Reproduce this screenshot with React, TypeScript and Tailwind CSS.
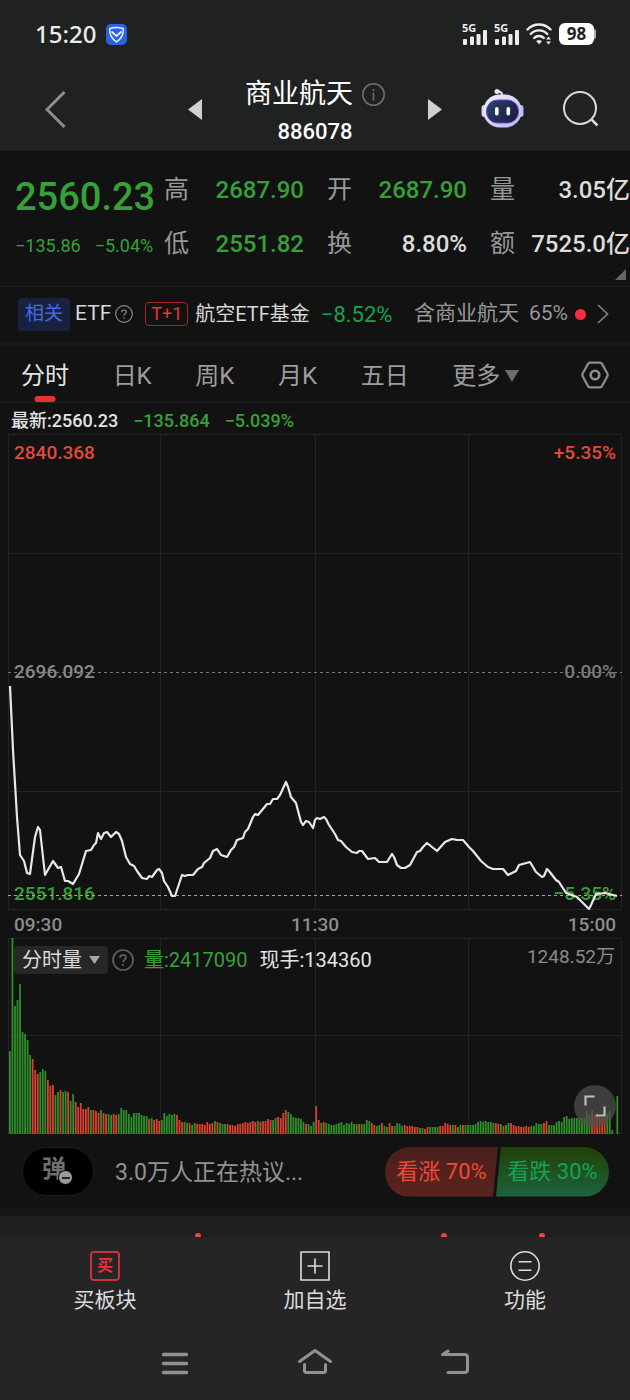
import { useState } from "react";

type Tone = "up" | "down" | "plain";

type Quote = {
  label: string;
  value: string;
  tone: Tone;
};

const toneClass: Record<Tone, string> = {
  up: "text-[#e5493b]",
  down: "text-[#36a137]",
  plain: "text-[#dcdcdc]",
};

const quotes: Quote[] = [
  { label: "高", value: "2687.90", tone: "down" },
  { label: "开", value: "2687.90", tone: "down" },
  { label: "量", value: "3.05亿", tone: "plain" },
  { label: "低", value: "2551.82", tone: "down" },
  { label: "换", value: "8.80%", tone: "plain" },
  { label: "额", value: "7525.0亿", tone: "plain" },
];

const periods = ["分时", "日K", "周K", "月K", "五日"];

// intraday price line, in chart units (614 x 476)
const pricePoints =
  "2,252 5,316 9,383 12,421 16,427 19,439 22,440 27,403 30,393 32,396 37,441 41,434 45,427 50,434 53,433 57,447 60,447 65,450 71,440 78,417 83,416 86,411 88,409 90,399 93,405 96,399 99,398 103,403 108,398 111,400 114,407 118,423 122,430 126,432 129,437 134,444 139,445 141,442 144,443 149,436 151,435 154,439 156,447 160,453 164,462 167,462 174,441 177,442 180,441 185,441 190,435 194,433 196,429 202,424 205,417 209,415 213,421 219,423 223,416 226,413 229,406 235,404 237,398 240,395 245,383 247,380 250,381 259,370 262,370 265,365 269,365 272,361 278,348 280,353 283,363 288,369 293,388 295,391 298,387 301,388 305,394 307,386 309,384 312,385 316,383 318,385 321,391 327,400 330,406 333,407 338,413 344,418 349,419 351,417 354,417 360,425 367,424 371,428 379,428 384,420 386,423 389,431 393,434 397,434 402,431 409,418 412,417 415,413 419,409 429,417 437,408 444,405 449,406 455,406 461,413 465,417 473,427 480,433 485,435 495,435 500,441 508,437 511,431 522,428 528,438 534,443 536,442 539,435 541,437 548,446 551,448 558,459 569,463 581,475 583,471 588,460 597,459 609,462";

// one entry per minute: bar height + direction (r = up, g = down)
const volumes = (
  "83g 196g 128g 134g 150g 102g 100g 94g 79g 75r 64r 60r 62g 65g 63g 54r 48r 49r 39g 42g 44r 42g 43g 42r 33g 40g 32r 27r 31r 25r 25r 27r 24g 24r 23r 21r 24g 21r 20r 20g 19g 20r 19r 20g 26g 24g 24g 20g 17g 21g 21g 21g 19g 18g 18g 15r 16g 14r 15r 13r " +
  "14g 21g 18g 20g 19g 20g 19r 14r 12r 12g 11g 11r 9g 11g 10r 10r 10r 9r 12r 10r 11r 13g 12r 11g 10g 10g 10r 9r 9r 8r 10r 10r 11r 12r 11r 12r 13r 12r 13g 12r 13r 13r 15r 14r 14g 16g 17r 16r 21r 24r 22g 20g 17g 16g 16g 15g 12g 10r 10g 8g " +
  "12g 28r 14r 11g 12r 11g 10g 9g 9g 10g 11g 12g 9g 11g 10g 12g 10g 10g 10r 10g 10g 14g 13g 11r 9r 8g 9g 11r 8g 7g 11r 8r 8g 11g 10g 8g 9r 8r 8r 8r 7r 7r 6g 6g 5r 7r 7g 7g 7g 7g 8r 8r 11r 10r 9r 9g 9r 7g 9g 9r " +
  "9g 9g 9g 9g 10g 12g 13g 12g 13g 12g 12g 11g 11r 10r 10g 8r 9g 11g 11r 9r 8r 8r 7r 7r 8r 7r 8g 8g 11g 10g 10g 11r 13r 9g 9g 9g 12g 13g 12g 17g 18g 15g 16g 16g 16g 16g 16g 16g 23g 19g 24r 18r 17r 17r 16r 17r 20g 23g 4g 0g 38g"
).split(" ");

function StatusBar() {
  return (
    <div className="flex h-[68px] items-center justify-between pl-[35px] pr-[34px]">
      <div className="flex items-center gap-2.5">
        <span className="font-['Noto_Sans'] text-2xl font-medium leading-7 text-[#ececec]">15:20</span>
        <svg className="h-[21px] w-[21px]" viewBox="0 0 21 21" fill="none">
          <rect width="21" height="21" rx="5" fill="#2b62e8" />
          <path d="M10.500 3.500c2.300 0 4.800.5 6.800 1.300.3 5.500-1.500 9.700-6.800 13-5.300-3.300-7.100-7.500-6.800-13 2-.8 4.500-1.300 6.800-1.300Z" stroke="#e4f2ff" strokeWidth="1.500" />
          <path d="M5.500 7.500 10.500 12l5-4.500" stroke="#e4f2ff" strokeWidth="1.700" />
        </svg>
      </div>
      <div className="flex items-center gap-[7px]">
        <Signal />
        <Signal />
        <svg className="h-[23px] w-[26px]" viewBox="0 0 26 23" fill="none" stroke="#ececec" strokeWidth="2.400" strokeLinecap="round">
          <path d="M1.500 6.500C8-.2 18-.2 24.500 6.500" />
          <path d="M4.700 11c4.600-4.800 12-4.800 16.600 0" />
          <path d="M8.200 15c2.600-2.700 7-2.700 9.600 0" />
          <path d="m13 21-2.500-2.900c1.500-1 3.500-1 5 0Z" fill="#ececec" strokeWidth="0.500" />
          <path d="m22.500 13.500 2.500 3h-5ZM22.500 21.500l2.500-3h-5Z" fill="#ececec" stroke="none" />
        </svg>
        <div className="flex items-center">
          <span className="flex h-[22px] w-[35px] items-center justify-center rounded-md bg-white font-['Noto_Sans'] text-[17px] font-bold leading-5 text-[#202221]">
            98
          </span>
          <span className="h-2.5 w-0.5 rounded-r-sm bg-[#b0b0b0]" />
        </div>
      </div>
    </div>
  );
}

function Signal() {
  return (
    <div className="relative h-[22px] w-[25px]">
      <span className="absolute left-0 top-0 font-['Noto_Sans'] text-[11px] font-bold leading-[10px] text-[#ececec]">5G</span>
      <svg className="h-[22px] w-[25px]" viewBox="0 0 25 22" fill="#ececec">
        <rect x="1" y="16" width="4" height="6" rx="1" />
        <rect x="8" y="13.500" width="4" height="8.500" rx="1" />
        <rect x="14.500" y="11" width="4" height="11" rx="1" />
        <rect x="21" y="7" width="4" height="15" rx="1" />
      </svg>
    </div>
  );
}

function Robot() {
  return (
    <svg className="h-[43px] w-[43px]" viewBox="0 0 43 43">
      <defs>
        <linearGradient id="shell" x1="0" y1="0" x2="1" y2="1">
          <stop offset="0" stopColor="#f4f3fd" />
          <stop offset="1" stopColor="#b9b2f0" />
        </linearGradient>
        <linearGradient id="visor" x1="0" y1="0" x2="1" y2="0.500">
          <stop offset="0" stopColor="#2a4468" />
          <stop offset="1" stopColor="#1b1f4a" />
        </linearGradient>
      </defs>
      <path d="M17 3.500c3 0 4.500 1 4.500 5" stroke="#e6e5f5" strokeWidth="1.800" fill="none" />
      <circle cx="16" cy="3.500" r="2.500" fill="#e6e5f5" />
      <rect x="0.500" y="17" width="6" height="12" rx="3" fill="#d9d6f8" />
      <rect x="36.500" y="17" width="6" height="12" rx="3" fill="#c3bdf5" />
      <rect x="2.500" y="6.500" width="38" height="33" rx="16" fill="url(#shell)" />
      <rect x="5.500" y="12" width="32" height="23" rx="11" fill="url(#visor)" stroke="#6a4bc8" strokeWidth="1" />
      <rect x="14" y="19" width="3.600" height="8.500" rx="1.800" fill="#fff" />
      <rect x="25.500" y="19" width="3.600" height="8.500" rx="1.800" fill="#fff" />
    </svg>
  );
}

function Header() {
  return (
    <header className="border-b border-[#1c1c1c] bg-[#202221]">
      <StatusBar />
      <div className="grid h-[82px] grid-cols-[1fr_226px_1fr] items-center">
        <div className="flex items-center justify-between pl-[45px]">
          <button aria-label="返回">
            <svg className="h-[37px] w-[21px]" viewBox="0 0 21 37" fill="none" stroke="#8d8d8d" strokeWidth="3">
              <path d="M19.500 1 2 18.500 19.500 36" />
            </svg>
          </button>
          <button aria-label="上一个">
            <svg className="h-[21px] w-3.5" viewBox="0 0 14 21" fill="#d0d0d0">
              <path d="M14 0v21L0 10.500Z" />
            </svg>
          </button>
        </div>
        <div className="flex flex-col items-center gap-1 pt-1.5">
          <div className="flex items-center gap-[9px]">
            <h1 className="text-[27px] leading-9 text-white">商业航天</h1>
            <svg className="h-[23px] w-[23px]" viewBox="0 0 23 23" fill="none" stroke="#6e6e6e" strokeWidth="1.600">
              <circle cx="11.500" cy="11.500" r="10.700" />
              <path d="M11.500 9.500v8M11.500 6v2" />
            </svg>
          </div>
          <span className="text-[22px] font-medium leading-8 text-white">886078</span>
        </div>
        <div className="flex items-center justify-between pr-[31px]">
          <button aria-label="下一个">
            <svg className="h-[21px] w-3.5" viewBox="0 0 14 21" fill="#d0d0d0">
              <path d="M0 0v21l14-10.500Z" />
            </svg>
          </button>
          <button aria-label="智能助手">
            <Robot />
          </button>
          <button aria-label="搜索">
            <svg className="h-9 w-9" viewBox="0 0 36 36" fill="none" stroke="#dadada" strokeWidth="2">
              <circle cx="17" cy="17" r="16" />
              <path d="m28 28 6.500 6.500" strokeWidth="2.500" />
            </svg>
          </button>
        </div>
      </div>
    </header>
  );
}

function QuotePanel() {
  return (
    <section className="relative flex h-[136px] border-b border-[#202020] pt-4">
      <div className="w-[164px] pl-[15px] text-[#36a137]">
        <p className="text-[38px] font-medium leading-[60px]">2560.23</p>
        <p className="flex gap-3.5 text-lg leading-[38px]">
          <span>−135.86</span>
          <span>−5.04%</span>
        </p>
      </div>
      <dl className="grid flex-1 grid-cols-3 content-start gap-x-[23px] gap-y-[18px] pt-[5px]">
        {quotes.map(({ label, value, tone }) => (
          <div key={label} className="flex items-center justify-between whitespace-nowrap leading-9">
            <dt className="text-[25px] text-[#989898]">{label}</dt>
            <dd className={`text-2xl font-medium ${toneClass[tone]}`}>{value}</dd>
          </div>
        ))}
      </dl>
      <svg className="absolute bottom-1.5 right-1 h-[11px] w-[11px]" viewBox="0 0 11 11" fill="#666">
        <path d="M11 0v11H0Z" />
      </svg>
    </section>
  );
}

function Related() {
  return (
    <section className="flex h-[54px] items-center whitespace-nowrap pl-[18px] pr-[21px] text-[#d8d8d8]">
      <span className="flex h-[33px] w-[52px] items-center justify-center rounded bg-[#182240] text-[19px] text-[#416ae6]">
        相关
      </span>
      <span className="ml-[5px] text-[21px]">ETF</span>
      <svg className="ml-1 h-[18px] w-[18px]" viewBox="0 0 18 18" fill="none" stroke="#8a8a8a" strokeWidth="1.200">
        <circle cx="9" cy="9" r="8.300" />
        <path d="M6.700 7.300c0-3 4.700-3 4.700-.3 0 1.700-2.400 1.800-2.400 3.800M9 12.300v1.500" />
      </svg>
      <span className="ml-3 flex h-6 w-[43px] items-center justify-center rounded border border-[#a3272b] text-lg text-[#e5343a]">
        T+1
      </span>
      <a href="#etf" className="ml-[7px] flex items-center gap-[11px]">
        <span className="text-xl">航空ETF基金</span>
        <span className="text-[22px] text-[#18a150]">−8.52%</span>
      </a>
      <a href="#holding" className="ml-auto flex items-center text-[21px] text-[#989898]">
        含商业航天
        <span className="ml-2.5">65%</span>
        <span className="ml-[7px] h-[11px] w-[11px] rounded-full bg-[#fb2c3c]" />
        <svg className="ml-[11px] h-5 w-3" viewBox="0 0 12 20" fill="none" stroke="#808080" strokeWidth="1.700">
          <path d="m1 1 9.500 9L1 19" />
        </svg>
      </a>
    </section>
  );
}

function PeriodTabs() {
  const [active, setActive] = useState("分时");

  return (
    <nav className="flex h-14 items-stretch justify-between border-b border-[#232323] pl-[21px] pr-[21px] text-2xl">
      {periods.map((name) => (
        <button
          key={name}
          onClick={() => setActive(name)}
          className={`relative pt-0.5 ${active === name ? "text-[#e4e4e4]" : "text-[#9c9c9c]"}`}
        >
          {name}
          {active === name && (
            <span className="absolute bottom-0 left-1/2 h-1.5 w-[21px] -translate-x-1/2 rounded-full bg-[#e93030]" />
          )}
        </button>
      ))}
      <button aria-haspopup="menu" className="flex items-center gap-[5px] pt-0.5 text-[#9c9c9c]">
        更多
        <svg className="h-3 w-3.5" viewBox="0 0 14 12" fill="#6c6c6c">
          <path d="M0 0h14L7 12Z" />
        </svg>
      </button>
      <button aria-label="设置" className="ml-[18px]">
        <svg className="h-7 w-7" viewBox="0 0 28 28" fill="none" stroke="#8d8d8d" strokeWidth="2.200">
          <path d="M8.500 1.700h11L20.700 2.400 26.600 13l0 1.800-5.900 10.800-1.200.7h-11l-1.200-.7L1.400 14.800V13L7.300 2.400Z" strokeLinejoin="round" />
          <circle cx="14" cy="14" r="4.300" strokeWidth="2.600" />
        </svg>
      </button>
    </nav>
  );
}

function PriceChart() {
  return (
    <div className="relative text-[19px] font-medium leading-6">
      <span className="absolute left-1.5 top-[7px] text-[#e5493b]">2840.368</span>
      <span className="absolute right-1.5 top-[7px] text-[#e5493b]">+5.35%</span>
      <span className="absolute left-1.5 top-1/2 -translate-y-1/2 text-[#8a8a8a]">2696.092</span>
      <span className="absolute right-1.5 top-1/2 -translate-y-1/2 text-[#7c7c7c]">0.00%</span>
      <span className="absolute bottom-1 left-1.5 text-[#36a137]">2551.816</span>
      <span className="absolute bottom-1 right-1.5 text-[#36a137]">−5.35%</span>
      <svg className="relative block h-auto w-full" viewBox="0 0 614 476" fill="none">
        <g stroke="#232323">
          <rect x="0.500" y="0.500" width="613" height="475" />
          <path d="M152.500 0v476M307.500 0v476M460.500 0v476M0 119.500h614M0 357.500h614" />
        </g>
        <path d="M0 238.500h614" stroke="#777" strokeDasharray="3 3" />
        <path d="M0 461.500h614" stroke="#c99f66" strokeDasharray="3 3" />
        <polyline points={pricePoints} stroke="#e8e8e8" strokeWidth="2.200" strokeLinejoin="round" />
      </svg>
    </div>
  );
}

function VolumeChart() {
  return (
    <div className="relative">
      <svg className="block h-auto w-full" viewBox="0 0 614 196" fill="none">
        <g stroke="#232323">
          <rect x="0.500" y="0.500" width="613" height="195" />
          <path d="M152.500 0v196M307.500 0v196M460.500 0v196M0 97.500h614" />
        </g>
        {volumes.map((item, i) => {
          const height = parseInt(item);
          return (
            <rect
              key={i}
              x={1 + i * 2.531}
              y={196 - height}
              width="1.800"
              height={height}
              fill={item.endsWith("r") ? "#d8412f" : "#2f8f2a"}
            />
          );
        })}
      </svg>
      <div className="absolute left-1.5 right-[7px] top-2 flex items-center text-xl leading-7">
        <div className="relative">
          <select
            aria-label="指标"
            className="block h-7 w-[94px] appearance-none rounded bg-[#272727] pl-2 text-xl leading-7 text-[#dcdcdc]"
          >
            <option>分时量</option>
          </select>
          <svg className="pointer-events-none absolute right-2 top-2.5 h-2 w-[11px]" viewBox="0 0 11 8" fill="#a8a8a8">
            <path d="M0 0h11L5.500 8Z" />
          </svg>
        </div>
        <svg className="ml-1 h-[22px] w-[22px]" viewBox="0 0 22 22" fill="none" stroke="#5e5e5e" strokeWidth="1.700">
          <circle cx="11" cy="11" r="10" />
          <path d="M8 9c0-4 6-4 6-.5 0 2.300-3 2.300-3 4.800M11 15v2" />
        </svg>
        <span className="ml-2.5 text-[#36a137]">量:2417090</span>
        <span className="ml-3 text-[#e4e4e4]">现手:134360</span>
        <span className="-mt-1.5 ml-auto text-[19px] text-[#8a8a8a]">1248.52万</span>
      </div>
      <button
        aria-label="全屏"
        className="absolute bottom-[7px] right-1.5 flex h-[42px] w-[42px] items-center justify-center rounded-full bg-[#505050]/70"
      >
        <svg className="h-[22px] w-[22px]" viewBox="0 0 22 22" fill="none" stroke="#bdbdbd" strokeWidth="2.200">
          <path d="M1.500 10.500v-9h9M20.500 11.500v9h-9" />
        </svg>
      </button>
    </div>
  );
}

function CommentBar() {
  return (
    <section className="flex h-[75px] items-center pl-[22px] pr-[21px]">
      <button className="relative h-[49px] w-[72px] shrink-0 rounded-full border border-[#1c1c1c] bg-black pb-1.5 pr-2 text-2xl font-bold leading-8 text-[#707070]">
        弹
        <span className="absolute bottom-2.5 right-5 flex h-[15px] w-[15px] items-center justify-center rounded-full border border-black bg-[#9a9a9a]">
          <span className="h-0.5 w-2 bg-[#222]" />
        </span>
      </button>
      <input
        aria-label="评论"
        placeholder="3.0万人正在热议..."
        className="ml-[21px] min-w-0 flex-1 bg-transparent pt-0.5 text-[23px] leading-8 outline-none placeholder:text-[#929292]"
      />
      <div className="flex h-[50px] shrink-0 overflow-hidden rounded-full text-[22px]">
        <button className="w-[113px] bg-gradient-to-b from-[#4a201c] to-[#5c231e] text-[#ee4a3c] [clip-path:polygon(0_0,100%_0,calc(100%-5px)_100%,0_100%)]">
          看涨 70%
        </button>
        <button className="-ml-0.5 w-[113px] bg-gradient-to-b from-[#214003] to-[#1c633c] text-[#13a352] [clip-path:polygon(5px_0,100%_0,100%_100%,0_100%)]">
          看跌 30%
        </button>
      </div>
    </section>
  );
}

function BottomBar() {
  return (
    <footer className="bg-[#252525] text-[#dcdcdc]">
      <div className="grid h-[88px] grid-cols-3 pt-3.5 text-[21px] leading-8">
        <button className="flex flex-col items-center gap-[3px]">
          <span className="flex h-[30px] w-[30px] items-center justify-center rounded border-2 border-[#c93236] text-base font-bold leading-5 text-[#ee2c3c]">
            买
          </span>
          买板块
        </button>
        <button className="flex flex-col items-center gap-[3px]">
          <svg className="h-[30px] w-[30px]" viewBox="0 0 30 30" fill="none" stroke="#dcdcdc" strokeWidth="1.600">
            <path d="M1 1h28v28H1ZM15 7.500v15M7.500 15h15" />
          </svg>
          加自选
        </button>
        <button className="flex flex-col items-center gap-[3px]">
          <svg className="h-[30px] w-[30px]" viewBox="0 0 30 30" fill="none" stroke="#dcdcdc" strokeWidth="1.600">
            <circle cx="15" cy="15" r="14.200" />
            <path d="M8.500 10.800h13M8.500 19.200h13" />
          </svg>
          功能
        </button>
      </div>
      <div className="flex h-[75px] items-center justify-center gap-[104px]">
        <button aria-label="最近任务">
          <svg className="h-9 w-9" viewBox="0 0 36 36" fill="none" stroke="#929292" strokeWidth="3.400" strokeLinecap="round">
            <path d="M6.500 9.500h23M6.500 18.500h23M6.500 27.500h23" />
          </svg>
        </button>
        <button aria-label="主屏幕">
          <svg className="h-9 w-9" viewBox="0 0 36 36" fill="none" stroke="#929292" strokeWidth="3" strokeLinecap="round" strokeLinejoin="round">
            <path d="M2.500 16.500 18 5.500l15.500 11M7.500 19.500v6q0 2 2 2h17q2 0 2-2v-6" />
          </svg>
        </button>
        <button aria-label="返回上页">
          <svg className="h-9 w-9" viewBox="0 0 36 36" fill="none" stroke="#929292" strokeWidth="3" strokeLinecap="round" strokeLinejoin="round">
            <path d="M11 6 5.500 9.500h22q3 0 3 2.500v13q0 2.500-3 2.500H11" />
          </svg>
        </button>
      </div>
    </footer>
  );
}

export default function App() {
  return (
    <div className="min-h-screen bg-[#121212] font-[Roboto,'Noto_Sans_CJK_SC',sans-serif]">
      <Header />
      <QuotePanel />
      <Related />
      <div className="h-1.5 bg-[#181818]" />
      <PeriodTabs />

      <p className="flex h-[31px] items-center gap-[15px] pl-[11px] pt-1 text-lg font-medium leading-7 text-[#36a137]">
        <span className="text-[#e4e4e4]">最新:2560.23</span>
        <span>−135.864</span>
        <span>−5.039%</span>
      </p>
      <main className="px-2">
        <PriceChart />
        <div className="flex h-7 items-center justify-between px-1.5 pt-0.5 text-[19px] font-medium text-[#8c8c8c]">
          <span>09:30</span>
          <span>11:30</span>
          <span>15:00</span>
        </div>
        <VolumeChart />
      </main>

      <CommentBar />
      <div className="h-[7px] bg-[#181818]" />
      <div className="relative h-[21px] overflow-hidden bg-[#1f1f1f]">
        <span className="absolute -bottom-0.5 left-[31%] h-1.5 w-1.5 rounded-full bg-[#e5493b]" />
        <span className="absolute -bottom-0.5 left-[70%] h-1.5 w-1.5 rounded-full bg-[#e5493b]" />
        <span className="absolute -bottom-0.5 right-[13.5%] h-1.5 w-1.5 rounded-full bg-[#e5493b]" />
      </div>
      <BottomBar />
    </div>
  );
}
